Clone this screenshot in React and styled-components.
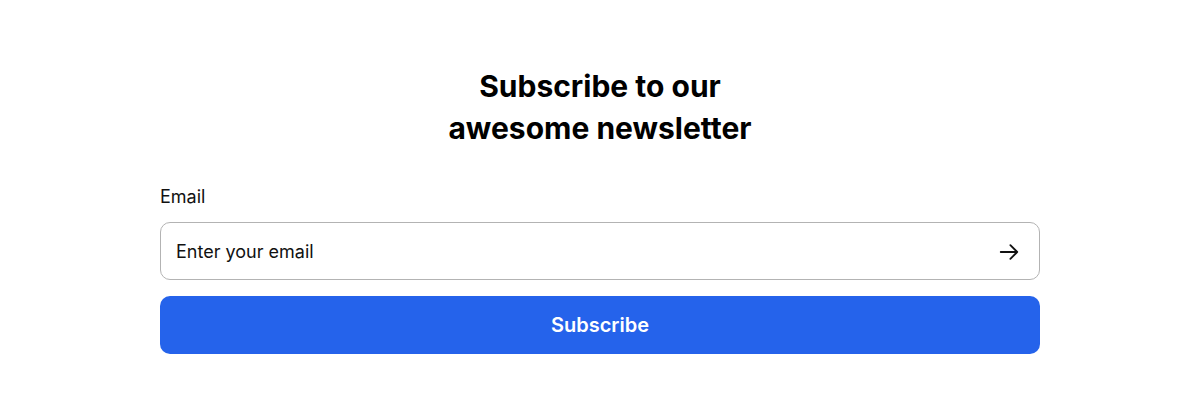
import React from "react";
import styled, { createGlobalStyle } from "styled-components";

const Global = createGlobalStyle`
  html, body { margin: 0; padding: 0; background: #fff; }
  body { font-family: Inter, "Noto Sans", sans-serif; color: #111; }
  * { box-sizing: border-box; }
`;

const Page = styled.div`
  display: flex;
  justify-content: center;
  padding: 65px 0 0;
`;

const Form = styled.form`
  width: 880px;
  display: flex;
  flex-direction: column;
`;

const Title = styled.h2`
  margin: 0 0 36px;
  text-align: center;
  font-size: 30px;
  line-height: 42px;
  font-weight: 700;
  color: #000;
`;

const Label = styled.label`
  font-size: 18px;
  line-height: 24px;
  color: #111;
  margin-bottom: 13px;
`;

const InputWrap = styled.div`
  display: flex;
  align-items: center;
  height: 58px;
  border: 1px solid #b3b3b3;
  border-radius: 10px;
  padding: 1px 19px 0 15px;
  margin-bottom: 16px;
`;

const Input = styled.input`
  flex: 1;
  border: none;
  outline: none;
  font-family: inherit;
  font-size: 18px;
  color: #111;
  background: transparent;
  padding: 0;
  &::placeholder { color: #111; }
`;

const IconButton = styled.button`
  border: none;
  background: none;
  padding: 0;
  display: flex;
  color: #111;
`;

const Submit = styled.button`
  height: 58px;
  border: none;
  border-radius: 10px;
  background: #2563eb;
  color: #fff;
  font-family: inherit;
  font-size: 20px;
  font-weight: 600;
`;

const Arrow = () => (
  <svg width="22" height="22" viewBox="0 0 24 24" fill="none" stroke="currentColor" strokeWidth="2" strokeLinecap="round" strokeLinejoin="round">
    <path d="M13.5 4.5 21 12m0 0-7.5 7.5M21 12H3" />
  </svg>
);

export default function App() {
  return (
    <>
      <Global />
      <Page>
        <Form onSubmit={(e) => e.preventDefault()}>
          <Title>
            Subscribe to our
            <br />
            awesome newsletter
          </Title>
          <Label htmlFor="email">Email</Label>
          <InputWrap>
            <Input id="email" placeholder="Enter your email" />
            <IconButton type="button" aria-label="Submit">
              <Arrow />
            </IconButton>
          </InputWrap>
          <Submit type="submit">Subscribe</Submit>
        </Form>
      </Page>
    </>
  );
}
